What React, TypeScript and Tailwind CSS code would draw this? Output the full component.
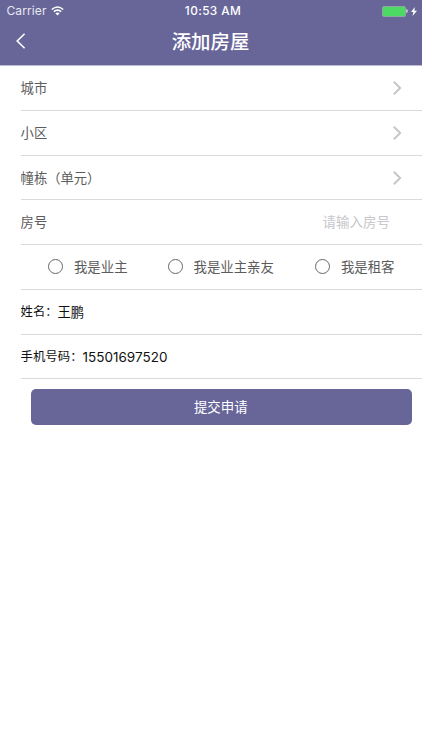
import React from 'react';

const PICKERS = ['城市', '小区', '幢栋（单元）'];

function Row({ children, className = '' }: { children: React.ReactNode; className?: string }) {
  return (
    <div className={`ml-[20.6px] flex h-[44.75px] items-center border-b border-[#dadada] ${className}`}>
      {children}
    </div>
  );
}

function Chevron() {
  return (
    <svg className="mr-5 h-[14px] w-[10px]" viewBox="0 0 10 14" fill="none" stroke="#c5c5ca" strokeWidth="1.9">
      <path d="M1.8 0.8 L8.2 7 L1.8 13.2" />
    </svg>
  );
}

function Radio({ label, className = '' }: { label: string; className?: string }) {
  return (
    <label className={`flex items-center gap-[11px] whitespace-nowrap ${className}`}>
      <span className="size-[15px] rounded-full border border-[#66666c]" />
      <span className="text-[13.4px]">{label}</span>
    </label>
  );
}

function StatusBar() {
  return (
    <div className="grid h-[22px] grid-cols-3 items-center">
      <div className="flex items-center gap-[4px] pl-[6.5px]">
        <span className="text-[12px] tracking-[0.1px] text-[#e8e8f2]">Carrier</span>
        <svg className="h-[10px] w-[13px]" viewBox="0 0 13 10" fill="none" stroke="#fff" strokeWidth="1.6">
          <path d="M0.8 3.5 Q6.5 -1.5 12.2 3.5" />
          <path d="M2.8 5.7 Q6.5 2.5 10.2 5.7" />
          <path d="M4.4 7.3 Q6.5 5.6 8.6 7.3 L6.5 9.6 Z" fill="#fff" stroke="none" />
        </svg>
      </div>
      <span className="pl-1 text-center text-[11.8px] font-medium tracking-[0.4px]">10:53 AM</span>
      <div className="flex items-center justify-end pr-[5px]">
        <span className="h-[11px] w-[24px] rounded-[2px] border border-[#8da6a0] bg-[#4cd964]" />
        <span className="h-[4px] w-[2px] rounded-r-full bg-[#b5c5c8]" />
        <svg className="ml-[3px] h-[9px] w-[6px]" viewBox="0 0 6 9" fill="#fff">
          <path d="M3.8 0 L0 5 H2.4 L1.5 9 L6 3.7 H3.4 Z" />
        </svg>
      </div>
    </div>
  );
}

export default function App() {
  return (
    <main className="h-[750px] w-[422px] overflow-hidden bg-white font-['Inter','Noto_Sans_CJK_SC',sans-serif] text-[13.3px] leading-5 text-[#5c5c5c]">
      <header className="h-[66.1px] border-b border-[#bcbbd2] bg-[#686699] text-white">
        <StatusBar />
        <div className="grid h-[38px] grid-cols-[60px_1fr_61px] items-center">
          <svg className="ml-[16px] h-[16px] w-[10px]" viewBox="0 0 10 16" fill="none" stroke="#fff" strokeWidth="1.6">
            <path d="M8.6 0.8 L1.2 8 L8.6 15.2" />
          </svg>
          <h1 className="pt-[2px] text-center text-[19.4px] font-medium">添加房屋</h1>
        </div>
      </header>
      {PICKERS.map((name) => (
        <Row key={name} className="justify-between pt-[0.6px]">
          <span>{name}</span>
          <Chevron />
        </Row>
      ))}
      <Row className="justify-between">
        <span>房号</span>
        <span className="pr-8 text-[13.5px] text-[#c7c7cc]">请输入房号</span>
      </Row>
      <Row>
        <Radio label="我是业主" className="ml-[27.4px]" />
        <Radio label="我是业主亲友" className="ml-[40px]" />
        <Radio label="我是租客" className="ml-[41px]" />
      </Row>
      <Row className="text-[#111]">
        <span className="pt-px text-[12.3px]">姓名：</span>
        <span>王鹏</span>
      </Row>
      <Row className="pt-px text-[#111]">
        <span className="pt-px text-[12.4px]">手机号码：</span>
        <span className="text-[13.5px]">15501697520</span>
      </Row>
      <button className="ml-[31px] mt-[10px] flex h-[36px] w-[380.5px] items-center justify-center rounded-[5px] bg-[#686699] pr-px text-[13.4px] text-white">
        提交申请
      </button>
    </main>
  );
}
